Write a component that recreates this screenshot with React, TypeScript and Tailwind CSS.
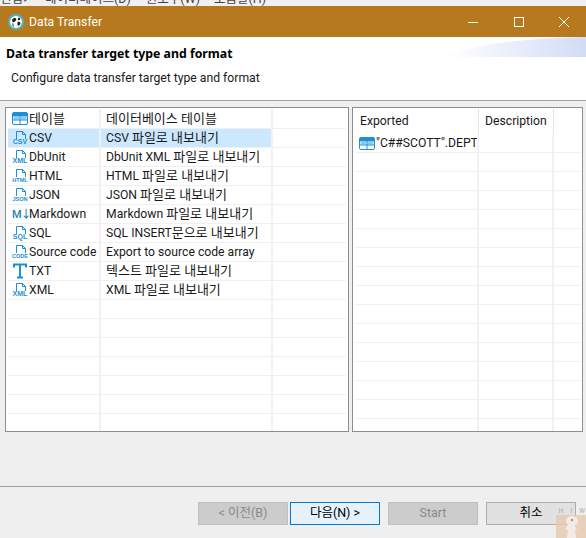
import React from "react"

const FONT = "font-['Roboto','Noto_Sans_CJK_KR',sans-serif]"

const Ko = ({ children }: { children: React.ReactNode }) => <span className="text-[13px]">{children}</span>

const TableIcon = () => (
  <svg width="16" height="13" viewBox="0 0 16 13" className="shrink-0">
    <rect x="0.5" y="0.5" width="15" height="12" rx="1.5" fill="#ffffff" stroke="#1c8fd6" />
    <rect x="0.5" y="0.5" width="15" height="4" rx="1" fill="#1c8fd6" />
    <rect x="1.5" y="5" width="5.5" height="2.5" fill="#8ccbef" />
    <rect x="8.5" y="5" width="6" height="2.5" fill="#8ccbef" />
    <path d="M8 4v8M1 8h14" stroke="#1c8fd6" strokeWidth="1" />
  </svg>
)

const FileIcon = ({ label }: { label: string }) => (
  <svg width="17" height="16" viewBox="0 0 17 16" className="shrink-0">
    <path d="M4.5 9V1.5h6l3 3V9M10.5 1.5v3h3" fill="none" stroke="#1c8fd6" strokeWidth="1" />
    <text
      x="8"
      y="14"
      textAnchor="middle"
      fontFamily="Liberation Sans, sans-serif"
      fontWeight="700"
      fontSize={label.length > 3 ? 5.6 : 7}
      fill="#1c8fd6"
    >
      {label}
    </text>
  </svg>
)

const MdIcon = () => (
  <span className="w-[17px] shrink-0 text-[11px] leading-none font-medium text-[#1c7fc4] tracking-[-1px]">M↓</span>
)

const TxtIcon = () => (
  <svg width="16" height="16" viewBox="0 0 16 16" className="shrink-0">
    <path d="M2 4.5V1.5h12v3M8 1.5V14M5 14.5h6" fill="none" stroke="#1c8fd6" strokeWidth="2" />
  </svg>
)

const rows = [
  { icon: <TableIcon />, name: <Ko>테이블</Ko>, desc: <Ko>데이터베이스 테이블</Ko> },
  { icon: <FileIcon label="CSV" />, name: "CSV", desc: <>CSV <Ko>파일로 내보내기</Ko></> },
  { icon: <FileIcon label="XML" />, name: "DbUnit", desc: <>DbUnit XML <Ko>파일로 내보내기</Ko></> },
  { icon: <FileIcon label="HTML" />, name: "HTML", desc: <>HTML <Ko>파일로 내보내기</Ko></> },
  { icon: <FileIcon label="JSON" />, name: "JSON", desc: <>JSON <Ko>파일로 내보내기</Ko></> },
  { icon: <MdIcon />, name: "Markdown", desc: <>Markdown <Ko>파일로 내보내기</Ko></> },
  { icon: <FileIcon label="SQL" />, name: "SQL", desc: <>SQL INSERT<Ko>문으로 내보내기</Ko></> },
  { icon: <FileIcon label="CODE" />, name: "Source code", desc: "Export to source code array" },
  { icon: <TxtIcon />, name: "TXT", desc: <Ko>텍스트 파일로 내보내기</Ko> },
  { icon: <FileIcon label="XML" />, name: "XML", desc: <>XML <Ko>파일로 내보내기</Ko></> },
]

const TargetTable = () => (
  <div className="w-[344px] h-[325px] border border-[#8c8c94] bg-white p-px overflow-hidden">
    {Array.from({ length: 17 }).map((_, i) => {
      const row = rows[i]
      return (
        <div key={i} className={`flex mx-px border-b border-[#f0f0f0] ${i === 0 ? "h-[20px]" : "h-[19px]"}`}>
          <div className={`w-[93px] shrink-0 flex items-center pl-[4px] border-r-2 border-[#f0f0f5] whitespace-nowrap overflow-hidden ${i === 1 ? "bg-[#cce8ff]" : ""}`}>
            {row && <span className="w-[17px] shrink-0 flex justify-start">{row.icon}</span>}
            {row && <span>{row.name}</span>}
          </div>
          <div className={`w-[172px] shrink-0 flex items-center pl-[5px] border-r-2 border-[#f0f0f5] whitespace-nowrap overflow-hidden ${i === 1 ? "bg-[#cce8ff]" : ""}`}>
            {row && <span>{row.desc}</span>}
          </div>
        </div>
      )
    })}
  </div>
)

const ExportTable = () => (
  <div className="w-[231px] h-[325px] border border-[#8c8c94] bg-white p-px overflow-hidden">
    <div className="flex h-[25px]">
      <div className="w-[125px] shrink-0 pl-[6px] flex items-center border-r border-[#e5e5e5]">Exported</div>
      <div className="w-[75px] shrink-0 pl-[6px] flex items-center border-r border-[#e5e5e5]">Description</div>
    </div>
    {Array.from({ length: 16 }).map((_, i) => (
      <div key={i} className="flex h-[19px] ml-px border-b border-[#f0f0f0]">
        <div className="w-[124px] shrink-0 flex items-center gap-px pl-[4px] border-r-2 border-[#f0f0f5] whitespace-nowrap overflow-hidden">
          {i === 0 && <TableIcon />}
          {i === 0 && <span>"C##SCOTT".DEPT</span>}
        </div>
        <div className="w-[75px] shrink-0 border-r-2 border-[#f0f0f5]" />
      </div>
    ))}
  </div>
)

const WizardButton = ({ label, className }: { label: string; className: string }) => (
  <button className={`w-[90px] h-[23px] border flex items-center justify-center text-[12.5px] ${className}`}>{label}</button>
)

export default function App() {
  return (
    <div className={`relative w-[586px] h-[538px] overflow-hidden flex flex-col bg-[#efefef] text-[12.2px] text-[#1a1a1a] ${FONT}`}>
      <div className="h-[6px] bg-[#f0f0f0] overflow-hidden flex items-end text-[12.5px] leading-[14px] text-[#444444] whitespace-nowrap">
        <span className="w-[30px] shrink-0 text-right overflow-hidden">편집기</span>
        <span className="ml-[15px]">데이터베이스(D)</span>
        <span className="ml-[15px]">윈도우(W)</span>
        <span className="ml-[14px]">도움말(H)</span>
      </div>

      <div className="h-[31px] bg-[#b7791d] flex items-center pl-2 text-white">
        <svg width="16" height="16" viewBox="0 0 16 16" className="shrink-0">
          <circle cx="8" cy="8" r="7" fill="#ffffff" stroke="#4fb3bf" strokeWidth="2" />
          <path d="M4 6c1-2 3-2.5 4-1.5s-.5 3-2 3.5-2.5 4 0 4.5M9.5 8c1.5-.5 3 0 3 1.5s-2 2.5-3 2z" fill="#222222" />
          <circle cx="11" cy="5" r="1.2" fill="#222222" />
        </svg>
        <span className="ml-[5px] translate-y-px">Data Transfer</span>
        <div className="ml-auto flex items-center">
          <span className="w-[46px] flex justify-center">
            <svg width="10" height="10" viewBox="0 0 10 10"><path d="M0 5.5h10" stroke="#fff" /></svg>
          </span>
          <span className="w-[46px] flex justify-center">
            <svg width="10" height="10" viewBox="0 0 10 10"><rect x="0.5" y="0.5" width="9" height="9" fill="none" stroke="#fff" /></svg>
          </span>
          <span className="w-[44px] flex justify-center">
            <svg width="10" height="10" viewBox="0 0 10 10"><path d="M0 0l10 10M10 0L0 10" stroke="#fff" /></svg>
          </span>
        </div>
      </div>

      <div className="relative h-[64px] bg-white border-b border-[#a0a0a0]">
        <svg width="140" height="20" viewBox="0 0 140 20" className="absolute right-0 top-0">
          <defs>
            <linearGradient id="band" x1="0" x2="1" y1="0" y2="0">
              <stop offset="0" stopColor="#ffffff" />
              <stop offset="1" stopColor="#d2dcf5" />
            </linearGradient>
          </defs>
          <path d="M0 20C20 8 80 1 140 0V20Z" fill="url(#band)" />
        </svg>
        <p className="absolute left-[6px] top-[8px] font-['Noto_Sans',sans-serif] text-[12.3px] font-bold text-black">Data transfer target type and format</p>
        <p className="absolute left-[11px] top-[32px]">Configure data transfer target type and format</p>
      </div>

      <div className="flex gap-[3px] pl-[5px] pt-[6px] h-[386px] border-b border-[#a0a0a0]">
        <TargetTable />
        <ExportTable />
      </div>

      <div className="flex pl-[198px] pt-[15px]">
        <WizardButton label="< 이전(B)" className="bg-[#cccccc] border-[#bfbfbf] text-[#8a8a8a]" />
        <WizardButton label="다음(N) >" className="ml-[2px] bg-[#e5f1fb] border-[#0078d7] text-black" />
        <WizardButton label="Start" className="ml-[8px] bg-[#cccccc] border-[#bfbfbf] text-[#8a8a8a]" />
        <WizardButton label="취소" className="ml-[8px] bg-[#e1e1e1] border-[#adadad] text-black" />
      </div>

      <div className="absolute right-0 bottom-0 w-[30px] h-[23px] bg-[#e6c9ae]/80 flex items-end justify-center">
        <svg width="22" height="23" viewBox="0 0 22 23">
          <ellipse cx="12" cy="6" rx="6" ry="5" fill="#f3ece4" />
          <path d="M8 10l-3 4 3 1-1 8h9l-1-8 2-1-3-4z" fill="#f3ece4" />
          <circle cx="12" cy="5" r="1.2" fill="#9a8f86" />
        </svg>
      </div>
      <div className="absolute right-[1px] bottom-[24px] flex gap-[7px] text-[6.5px] leading-none text-[#a8a8a8]">
        <span>H</span>
        <span>I</span>
        <span>W</span>
      </div>
    </div>
  )
}
